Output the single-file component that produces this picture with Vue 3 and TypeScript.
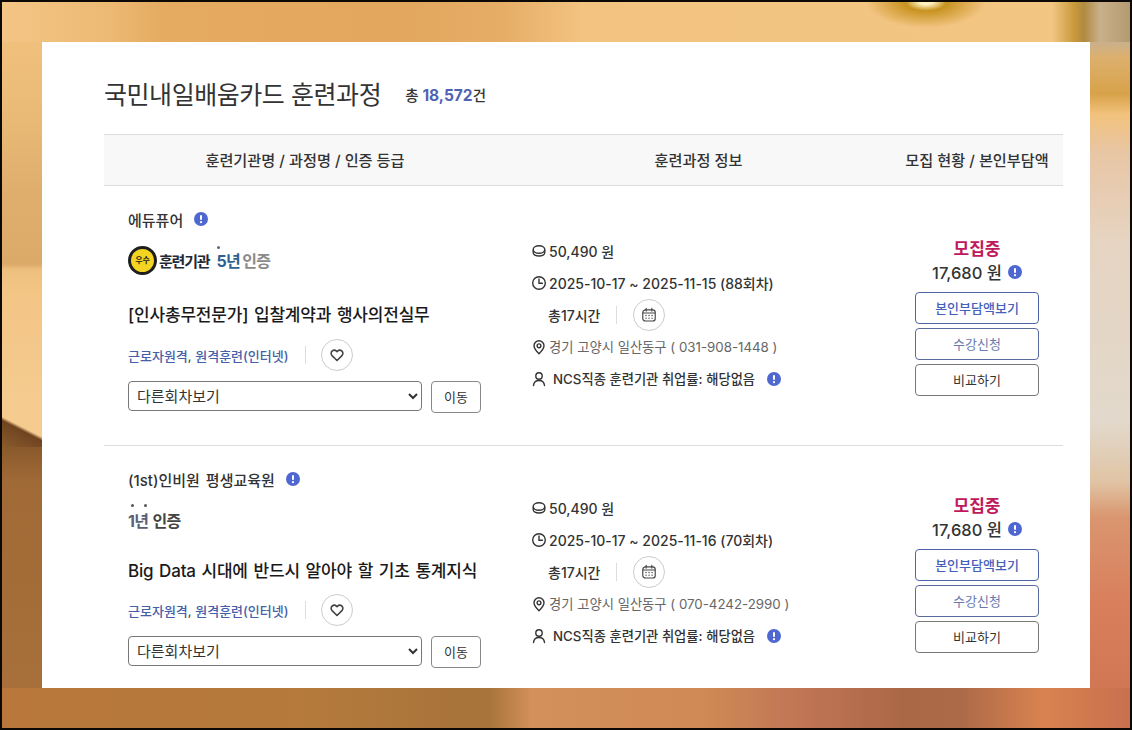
<script setup lang="ts">
interface Course {
  provider: string
  badge: boolean
  years: string
  title: string
  date: string
  address: string
}
const courses: Course[] = [
  { provider: '에듀퓨어', badge: true, years: '5년', title: '[인사총무전문가] 입찰계약과 행사의전실무', date: '2025-10-17 ~ 2025-11-15 (88회차)', address: '경기 고양시 일산동구 ( 031-908-1448 )' },
  { provider: '(1st)인비원 평생교육원', badge: false, years: '1년', title: 'Big Data 시대에 반드시 알아야 할 기초 통계지식', date: '2025-10-17 ~ 2025-11-16 (70회차)', address: '경기 고양시 일산동구 ( 070-4242-2990 )' }
]
</script>

<template>
  <div class="page">
    <main class="panel">
      <header class="head">
        <h1 class="title">국민내일배움카드 훈련과정</h1>
        <p class="total">총 <b>18,572</b>건</p>
      </header>
      <div class="thead">
        <div>훈련기관명 / 과정명 / 인증 등급</div>
        <div>훈련과정 정보</div>
        <div>모집 현황 / 본인부담액</div>
      </div>
      <article v-for="c in courses" :key="c.title" class="row">
        <section class="col-a" :class="{ 'col-a-short': !c.badge }">
          <div class="provider">
            <span>{{ c.provider }}</span>
            <svg class="info" viewBox="0 0 14 14"><circle cx="7" cy="7" r="7" fill="#4f67d0" /><rect x="6" y="3" width="2" height="5" rx="1" fill="#fff" /><circle cx="7" cy="10.2" r="1.1" fill="#fff" /></svg>
          </div>
          <div class="logo" :class="{ 'logo-short': !c.badge }">
            <template v-if="c.badge">
              <span class="medal">우수</span>
              <span class="org">훈련기관</span>
              <span class="yr dot-one">{{ c.years }}</span>
              <span class="cert">인증</span>
            </template>
            <template v-else>
              <span class="yr yr-dark dot-two">{{ c.years }}</span>
              <span class="cert cert-dark">인증</span>
            </template>
          </div>
          <h2 class="course" :class="{ 'course-short': !c.badge }">{{ c.title }}</h2>
          <div class="tags">
            <span class="tag"><em>근로자원격</em>, <em>원격훈련(인터넷)</em></span>
            <i class="sep sep-tag"></i>
            <button class="round" type="button" aria-label="찜">
              <svg viewBox="0 0 24 24" width="16" height="16" fill="none" stroke="#444" stroke-width="2.400" stroke-linejoin="round"><path d="M12 20.2 4.6 12.9a4.7 4.7 0 0 1 0-6.7 4.7 4.7 0 0 1 6.6 0l.8.8.8-.8a4.7 4.7 0 0 1 6.6 0 4.7 4.7 0 0 1 0 6.7Z" /></svg>
            </button>
          </div>
          <div class="pick">
            <select class="select"><option>다른회차보기</option></select>
            <button class="go" type="button">이동</button>
          </div>
        </section>

        <section class="col-b">
          <div class="line">
            <svg class="ic" viewBox="0 0 16 16" fill="none" stroke="#333" stroke-width="1.4"><ellipse cx="8" cy="6.500" rx="5.800" ry="3.800" /><path d="M2.200 7v2.600c0 2 2.600 3.400 5.800 3.400s5.800-1.400 5.800-3.400V7" /></svg>
            <span>50,490 원</span>
          </div>
          <div class="line">
            <svg class="ic" viewBox="0 0 16 16" fill="none" stroke="#333" stroke-width="1.4" stroke-linecap="round"><circle cx="8" cy="8" r="6.300" /><path d="M8 4v4.200h3.400" /></svg>
            <span>{{ c.date }}</span>
          </div>
          <div class="line hours">
            <span>총17시간</span>
            <i class="sep"></i>
            <button class="round" type="button" aria-label="달력">
              <svg viewBox="0 0 18 18" width="16" height="16" fill="none" stroke="#444" stroke-width="1.3" stroke-linecap="round"><rect x="2" y="3.200" width="14" height="12.600" rx="3" /><path d="M5.800 1.600v3M12.200 1.600v3M2.400 6.800h13.200" /><path d="M5.600 9.600h.1M9 9.600h.1M12.400 9.600h.1M5.600 12.600h.1M9 12.600h.1M12.400 12.600h.1" stroke-width="1.500" /></svg>
            </button>
          </div>
          <div class="line line-sm addr">
            <svg class="ic" viewBox="0 0 16 16" fill="none" stroke="#333" stroke-width="1.4"><path d="M8 14.800C5 11.800 3 9.600 3 6.800a5 5 0 0 1 10 0c0 2.800-2 5-5 8Z" stroke-linejoin="round" /><circle cx="8" cy="6.800" r="1.900" /></svg>
            <span>{{ c.address }}</span>
          </div>
          <div class="line line-sm ncs">
            <svg class="ic" viewBox="0 0 16 16" fill="none" stroke="#333" stroke-width="1.4" stroke-linecap="round"><circle cx="8" cy="5" r="3.200" /><path d="M2.500 14.500c.3-3.200 2.500-5 5.500-5s5.200 1.800 5.500 5" /></svg>
            <span>NCS직종 훈련기관 취업률: 해당없음</span>
            <svg class="info ncs-info" viewBox="0 0 14 14"><circle cx="7" cy="7" r="7" fill="#4f67d0" /><rect x="6" y="3" width="2" height="5" rx="1" fill="#fff" /><circle cx="7" cy="10.2" r="1.1" fill="#fff" /></svg>
          </div>
        </section>

        <section class="col-c">
          <div class="status">모집중</div>
          <div class="price">
            <span>17,680 원</span>
            <svg class="info" viewBox="0 0 14 14"><circle cx="7" cy="7" r="7" fill="#4f67d0" /><rect x="6" y="3" width="2" height="5" rx="1" fill="#fff" /><circle cx="7" cy="10.2" r="1.1" fill="#fff" /></svg>
          </div>
          <button class="act act-main" type="button">본인부담액보기</button>
          <button class="act act-soft" type="button">수강신청</button>
          <button class="act" type="button">비교하기</button>
        </section>
      </article>
    </main>
  </div>
</template>

<style>
body { margin: 0; }
</style>

<style scoped>
.page {
  box-sizing: border-box;
  width: 1132px;
  height: 730px;
  padding: 40px;
  border: 2px solid #0c0806;
  display: flex;
  overflow: hidden;
  font-family: Inter, "Noto Sans CJK KR", "Noto Sans", sans-serif;
  color: #222;
  background:
    radial-gradient(ellipse 60px 26px at 924px 0, #fff0c0 0 10%, #c8921f 34%, rgba(200, 146, 31, 0) 100%),
    linear-gradient(90deg, transparent 1050px, #c99a3c 1072px, #b08a40 1082px, #c9b08c 1098px, #b49a70 1128px) 0 0 / 100% 40px no-repeat,
    linear-gradient(90deg, #f3c585 0, #ecb973 110px, #e5ab60 160px, #e3a75e 400px, #e6ad66 500px, #f2c381 580px, #f3c684 1128px) 0 0 / 100% 40px no-repeat,
    linear-gradient(90deg, #b8763a 0, #b57a3c 300px, #a6733a 485px, #d3905a 530px, #cf8a55 700px, #c07555 800px, #ab6847 900px, #ad6a48 960px, #d8834f 1040px, #c97050 1128px) 0 100% / 100% 40px no-repeat,
    linear-gradient(207deg, #f5cb90 0 44%, #6e4420 51%, #8a5a2c 100%) 0 411px / 40px 34px no-repeat,
    linear-gradient(180deg, #f2c27e 0, #ecbd79 90px, #dfae6d 190px, #dcaa68 262px, #eec080 268px, #f3c585 290px, #f5cb90 411px, #8a5a2c 445px, #a06a36 480px, #a9703a 728px) 0 0 / 40px 100% no-repeat,
    linear-gradient(180deg, #b49a70 0, #c9b08c 40px, #dcb06e 55px, #d8a24a 92px, #f2c27c 112px, #e8c6a4 150px, #e6d4c2 240px, #e2d9cc 420px, #e0c4a4 480px, #d99670 515px, #d97f5c 600px, #cd7350 728px) 100% 0 / 40px 100% no-repeat;
}
.panel {
  flex: 1;
  min-width: 0;
  overflow: hidden;
  background: #fff;
  padding-left: 62px;
  padding-right: 27px;
}
.head {
  display: flex;
  align-items: center;
  height: 92px;
  gap: 24px;
}
.title {
  margin: 0;
  font-size: 25px;
  font-weight: 400;
  letter-spacing: -0.45px;
  color: #333;
  line-height: 36px;
  position: relative;
  top: 7px;
}
.total {
  margin: 0;
  font-size: 14.500px;
  font-weight: 500;
  color: #333;
  position: relative;
  top: 6px;
}
.total b { color: #4f63b5; font-weight: 700; font-size: 15.500px; }
.thead {
  display: grid;
  grid-template-columns: 402px 385px 172px;
  align-items: center;
  height: 47px;
  padding-bottom: 3px;
  border-top: 1px solid #ddd;
  border-bottom: 1px solid #ddd;
  background: #f8f8f8;
  text-align: center;
  font-size: 15.200px;
  font-weight: 500;
  color: #333;
}
.row {
  display: grid;
  grid-template-columns: 402px 385px 172px;
  align-items: center;
  border-bottom: 1px solid #ddd;
}
.col-a { padding: 24px 0 32px 24px; }
.col-a-short { padding-bottom: 31px; }
.provider {
  display: flex;
  align-items: center;
  gap: 11px;
  height: 18px;
  font-size: 15px;
  font-weight: 500;
  word-spacing: 2px;
  color: #333;
}
.info { width: 14px; height: 14px; flex: none; }
.logo {
  display: flex;
  align-items: center;
  height: 30px;
  margin-top: 17px;
  font-size: 16px;
  font-weight: 700;
  letter-spacing: -0.6px;
}
.logo-short { margin-bottom: -5px; }
.medal {
  box-sizing: border-box;
  width: 29px;
  height: 29px;
  border: 3px solid #1e1e1e;
  border-radius: 50%;
  background: #f3d423;
  font-size: 8px;
  line-height: 23px;
  text-align: center;
  letter-spacing: 0;
  flex: none;
}
.org { margin-left: 2px; font-size: 15px; color: #1f2a36; letter-spacing: -1.2px; }
.yr { position: relative; margin-left: 7px; color: #2f5f8f; }
.yr-dark { margin-left: 0; color: #5a5f74; }
.cert { margin-left: 2px; color: #8a8a8a; }
.cert-dark { margin-left: 4px; color: #444; }
.dot-one::before,
.dot-two::before,
.dot-two::after {
  content: "";
  position: absolute;
  top: -2px;
  left: 1px;
  width: 3px;
  height: 3px;
  border-radius: 50%;
  background: #5a6a80;
}
.dot-two::before { left: 3px; top: -4px; background: #555; }
.dot-two::after { left: 16px; top: -4px; background: #555; }
.course {
  margin: 27px 0 0;
  font-size: 17px;
  line-height: 26px;
  font-weight: 500;
  letter-spacing: -0.2px;
  word-spacing: 1.400px;
  color: #1a1a1a;
  white-space: nowrap;
}
.course-short { margin-top: 28px; }
.tags {
  display: flex;
  align-items: center;
  height: 32px;
  margin-top: 11px;
}
.course-short + .tags { margin-top: 10px; }
.tag { font-size: 13px; color: #333; }
.tag em { font-style: normal; font-weight: 500; color: #4560a8; }
.sep {
  display: block;
  width: 1px;
  height: 18px;
  margin: 0 16px;
  background: #ddd;
}
.sep-tag { margin-right: 15px; }
.round {
  display: flex;
  align-items: center;
  justify-content: center;
  width: 32px;
  height: 32px;
  padding: 0;
  border: 1px solid #ccc;
  border-radius: 50%;
  background: #fff;
}
.pick {
  display: flex;
  align-items: flex-start;
  gap: 9px;
  margin-top: 10px;
}
.select {
  width: 294px;
  height: 30px;
  padding: 0 4px 2px;
  border: 1px solid #777;
  border-radius: 4px;
  background: #fff;
  font: 400 15px "Noto Sans CJK KR", sans-serif;
  color: #333;
}
.go {
  width: 50px;
  height: 32px;
  padding: 0 0 2px;
  border: 1px solid #888;
  border-radius: 4px;
  background: #fff;
  font: 400 13px "Noto Sans CJK KR", sans-serif;
  color: #333;
}
.col-b { padding-left: 25px; padding-bottom: 2px; }
.line {
  display: flex;
  align-items: center;
  gap: 2px;
  height: 32px;
  font-size: 14px;
  font-weight: 500;
  color: #333;
  white-space: nowrap;
}
.line-sm { font-size: 13.300px; }
.ic { width: 16px; height: 16px; flex: none; }
.hours { padding-left: 17px; gap: 0; }
.addr { font-weight: 400; color: #666; }
.ncs { gap: 6px; }
.ncs-info { margin-left: 6px; }
.col-c {
  display: flex;
  flex-direction: column;
  align-items: center;
}
.status {
  height: 26px;
  font-size: 17px;
  line-height: 28px;
  font-weight: 700;
  color: #c0185c;
}
.price {
  display: flex;
  align-items: center;
  gap: 6px;
  height: 22px;
  margin-bottom: 9px;
  font-size: 16.500px;
  font-weight: 500;
  color: #333;
}
.act {
  box-sizing: border-box;
  width: 124px;
  height: 32px;
  margin-bottom: 4px;
  padding: 0 0 2px;
  border: 1px solid #777;
  border-radius: 4px;
  background: #fff;
  font: 400 13px "Noto Sans CJK KR", sans-serif;
  color: #333;
}
.act:last-child { margin-bottom: 0; }
.act-main { border-color: #4f63a8; color: #4560b8; font-weight: 500; }
.act-soft { border-color: #5a6a9a; color: #6a7ab0; }
</style>
